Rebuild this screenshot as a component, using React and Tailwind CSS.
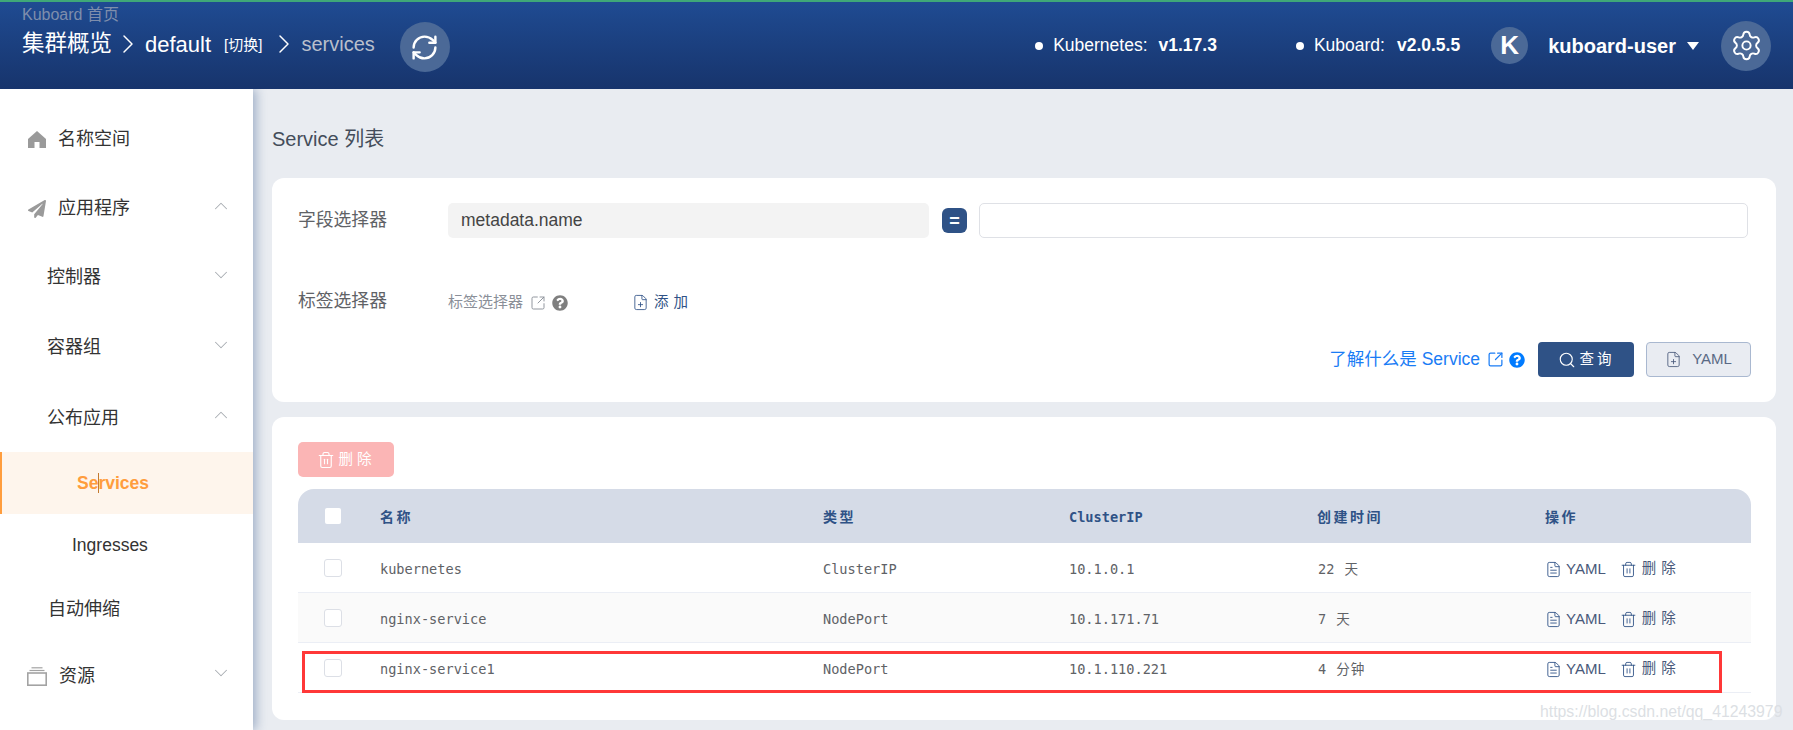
import { ChevronDown, ChevronUp, ChevronRight, RefreshCw, Settings, SquareArrowOutUpRight, FilePlus, FileText, Trash2, Search } from 'lucide-react';
import { FaQuestionCircle, FaPaperPlane } from 'react-icons/fa';

const rows = [
    { name: 'kubernetes', type: 'ClusterIP', ip: '10.1.0.1', num: '22', unit: '天' },
    { name: 'nginx-service', type: 'NodePort', ip: '10.1.171.71', num: '7', unit: '天', striped: true },
    { name: 'nginx-service1', type: 'NodePort', ip: '10.1.110.221', num: '4', unit: '分钟' },
];

const tableCols = 'grid grid-cols-[82px_443px_246px_248px_228px_1fr] items-center';

function NavRow({ height, indent, icon, label, chevron }) {
    return (
        <div className={`flex items-center ${height} ${indent} pt-[2px] pr-[21px] text-[18px] text-[#333]`}>
            {icon}
            <span>{label}</span>
            {chevron === 'up' && <ChevronUp className="ml-auto -mt-[6px] w-[22px] h-[22px] text-[#a8acb2]" strokeWidth={1.1} />}
            {chevron === 'down' && <ChevronDown className="ml-auto -mt-[6px] w-[22px] h-[22px] text-[#a8acb2]" strokeWidth={1.1} />}
        </div>
    );
}

function Sidebar() {
    return (
        <div className="relative z-10 w-[253px] shrink-0 bg-white pt-[14px] shadow-[3px_0_10px_rgba(47,82,134,0.4)]">
            <NavRow
                height="h-[70px]"
                indent="pl-[28px]"
                label="名称空间"
                icon={
                    <svg viewBox="0 0 18 18" className="w-[18px] h-[18px] mr-[12px]" fill="#9a9a9a">
                        <path d="M9 1 L18 9 V18 H11.5 V12 H6.5 V18 H0 V9 Z" />
                    </svg>
                }
            />
            <NavRow
                height="h-[69px]"
                indent="pl-[28px]"
                label="应用程序"
                chevron="up"
                icon={<FaPaperPlane className="w-[18px] h-[18px] mr-[12px] text-[#9a9a9a]" />}
            />
            <NavRow height="h-[69px]" indent="pl-[47px]" label="控制器" chevron="down" />
            <NavRow height="h-[71px]" indent="pl-[47px]" label="容器组" chevron="down" />
            <NavRow height="h-[70px]" indent="pl-[47px]" label="公布应用" chevron="up" />
            <div className="relative flex items-center h-[62px] pl-[75px] border-l-2 border-[#ff9d3d] bg-[#fef5ec] text-[17.5px] font-bold text-[#ff9d3d]">
                Services
                <span className="absolute left-[96px] top-[21px] h-[20px] w-px bg-[#c47a30]" />
            </div>
            <div className="flex items-center h-[62px] pl-[72px] pt-[1px] text-[17.5px] text-[#333]">Ingresses</div>
            <NavRow height="h-[64px]" indent="pl-[48px]" label="自动伸缩" />
            <NavRow
                height="h-[70px]"
                indent="pl-[27px]"
                label="资源"
                chevron="down"
                icon={
                    <svg viewBox="0 0 20 19" className="w-[20px] h-[19px] mr-[12px]" fill="none" stroke="#a3a3a3">
                        <path d="M4.5 0.8 H15.5" strokeWidth="1.2" />
                        <path d="M2.5 3.5 H17.5" strokeWidth="1.2" />
                        <rect x="0.8" y="6" width="18.4" height="12.2" strokeWidth="1.6" />
                    </svg>
                }
            />
        </div>
    );
}

function Header() {
    return (
        <div className="relative z-20 flex h-[89px] shrink-0 border-t-2 border-[#3fa878] bg-gradient-to-b from-[#1f4b92] to-[#17346c] text-white">
            <div className="flex self-start pl-[22px]">
                <div>
                    <div className="mt-[3px] h-[20px] text-[16px] leading-[20px] text-[#7f8eac]">Kuboard 首页</div>
                    <div className="mt-[1px] flex items-center h-[36px]">
                        <span className="text-[22.5px]">集群概览</span>
                        <ChevronRight className="w-[32px] h-[32px]" strokeWidth={1.1} />
                        <span className="ml-[1px] text-[22px]">default</span>
                        <span className="ml-[13px] mt-[3px] text-[15px]">[切换]</span>
                        <ChevronRight className="ml-[6px] w-[32px] h-[32px]" strokeWidth={1.1} />
                        <span className="ml-[1px] text-[20px] text-[#b9bfcc]">services</span>
                    </div>
                </div>
                <div className="ml-[25px] mt-[20px] flex items-center justify-center w-[50px] h-[50px] rounded-full bg-[#4b6997]">
                    <RefreshCw className="w-[29px] h-[29px]" strokeWidth={2} />
                </div>
            </div>
            <div className="ml-auto flex items-center pr-[22px] text-[17.5px]">
                <span className="w-[8px] h-[8px] rounded-full bg-white mr-[10px]" />
                <span>Kubernetes:</span>
                <span className="ml-[11px] font-bold">v1.17.3</span>
                <span className="ml-[79px] w-[8px] h-[8px] rounded-full bg-white mr-[10px]" />
                <span>Kuboard:</span>
                <span className="ml-[12px] font-bold">v2.0.5.5</span>
                <span className="ml-[31px] flex items-center justify-center w-[37px] h-[37px] rounded-full bg-[#4b6997] text-[26px] font-bold">K</span>
                <span className="ml-[20px] text-[20px] font-bold">kuboard-user</span>
                <span className="ml-[11px] w-0 h-0 border-x-[6.5px] border-x-transparent border-t-[8px] border-t-white" />
                <span className="ml-[22px] flex items-center justify-center w-[50px] h-[50px] rounded-full bg-[#4b6997]">
                    <Settings className="w-[33px] h-[33px]" strokeWidth={1.4} />
                </span>
            </div>
        </div>
    );
}

function FilterCard() {
    return (
        <div className="h-[224px] rounded-[12px] bg-white pt-[25px] pl-[26px] pr-[28px]">
            <div className="flex items-center h-[35px]">
                <span className="w-[150px] text-[17.8px] text-[#606266]">字段选择器</span>
                <div className="flex items-center w-[481px] h-[35px] rounded-[5px] bg-[#f3f3f3] pl-[13px] text-[17.5px] text-[#444]">metadata.name</div>
                <span className="ml-[13px] flex items-center justify-center w-[25px] h-[25px] rounded-[6px] bg-[#2f5286] text-[18px] leading-none font-bold text-white">=</span>
                <div className="ml-[12px] flex-1 h-[35px] rounded-[5px] border border-[#dfe1e6]" />
            </div>
            <div className="flex items-center mt-[47px] h-[35px]">
                <span className="w-[150px] -mt-[2px] text-[17.8px] text-[#606266]">标签选择器</span>
                <span className="text-[15px] text-[#8a8f98]">标签选择器</span>
                <SquareArrowOutUpRight className="ml-[7px] w-[16px] h-[16px] text-[#8a8f98]" strokeWidth={1.4} />
                <FaQuestionCircle className="ml-[6px] w-[16px] h-[16px] text-[#7f7f7f]" />
                <FilePlus className="ml-[64px] w-[17px] h-[17px] text-[#2f5286]" strokeWidth={1.2} />
                <span className="ml-[5px] text-[14.5px] tracking-[5px] text-[#2f5286]">添加</span>
            </div>
            <div className="flex items-center justify-end mt-[22px] h-[35px] -mr-[3px]">
                <span className="text-[17.5px] text-[#1a7cf5]">了解什么是 Service</span>
                <SquareArrowOutUpRight className="ml-[7px] w-[17px] h-[17px] text-[#1a7cf5]" strokeWidth={1.75} />
                <FaQuestionCircle className="ml-[5px] w-[16px] h-[16px] text-[#007bff]" />
                <button className="ml-[13px] flex items-center justify-center w-[96px] h-[35px] rounded-[4px] bg-[#2f5286] text-[14.5px] tracking-[3px] text-white">
                    <Search className="w-[18px] h-[18px] mr-[4px]" strokeWidth={1.5} />
                    查询
                </button>
                <button className="ml-[12px] flex items-center justify-center w-[105px] h-[35px] rounded-[4px] border border-[#a9b8d0] bg-[#e9ecf2] text-[15px] text-[#5a6a85]">
                    <FilePlus className="w-[17px] h-[17px] mr-[10px] text-[#48597a]" strokeWidth={1.2} />
                    YAML
                </button>
            </div>
        </div>
    );
}

function Row({ row }) {
    return (
        <div className={`${tableCols} h-[50px] border-b border-[#ebeef5] font-['DejaVu_Sans_Mono','Noto_Sans_CJK_SC',monospace] text-[13.6px] text-[#606266] ${row.striped ? 'bg-[#fafafa]' : 'bg-white'}`}>
            <div className="pl-[26px]">
                <div className="w-[18px] h-[18px] rounded-[3px] border border-[#dcdfe6] bg-white" />
            </div>
            <span className="pt-[4px]">{row.name}</span>
            <span className="pt-[4px]">{row.type}</span>
            <span className="pt-[4px]">{row.ip}</span>
            <span className="pt-[3px] pl-px">
                {row.num}
                <span className="ml-[10px] tracking-[1px]">{row.unit}</span>
            </span>
            <span className="flex items-center pt-[3px] font-['Liberation_Sans','Noto_Sans_CJK_SC',sans-serif] text-[15px] text-[#48597a]">
                <FileText className="w-[17px] h-[17px] text-[#2f5286]" strokeWidth={1.25} />
                <span className="ml-[4px]">YAML</span>
                <Trash2 className="ml-[14px] w-[17px] h-[17px] text-[#2f5286]" strokeWidth={1.25} />
                <span className="ml-[5px] text-[14.5px] tracking-[5px]">删除</span>
            </span>
        </div>
    );
}

function ListCard() {
    return (
        <div className="h-[303px] rounded-[12px] bg-white pt-[25px] pl-[26px] pr-[25px]">
            <button className="flex items-center justify-center w-[96px] h-[35px] rounded-[5px] bg-[#fbb5b5] text-[14.5px] tracking-[4px] text-white">
                <Trash2 className="w-[18px] h-[18px] mr-[4px]" strokeWidth={1.5} />
                删除
            </button>
            <div className={`${tableCols} mt-[12px] h-[54px] rounded-t-[16px] bg-[#d5dbe7] text-[14px] font-bold tracking-[2.5px] text-[#2f5286]`}>
                <div className="pl-[27px]">
                    <div className="w-[16px] h-[16px] rounded-[2px] bg-white" />
                </div>
                <span className="pt-[2px]">名称</span>
                <span className="pt-[2px]">类型</span>
                <span className="pt-[2px] font-['DejaVu_Sans_Mono',monospace] text-[13.6px] tracking-normal">ClusterIP</span>
                <span className="pt-[2px]">创建时间</span>
                <span className="pt-[2px]">操作</span>
            </div>
            {rows.map((row) => (
                <Row key={row.name} row={row} />
            ))}
        </div>
    );
}

export default function App() {
    return (
        <div className="relative flex flex-col h-[730px] w-[1793px] overflow-hidden bg-[#e9ecf1] font-['Liberation_Sans','Noto_Sans_CJK_SC',sans-serif]">
            <Header />
            <div className="flex flex-1">
                <Sidebar />
                <div className="flex-1 pl-[19px] pr-[17px] pt-[36px]">
                    <div className="h-[28px] mb-[25px] text-[20px] leading-[28px] text-[#444c5a]">Service 列表</div>
                    <FilterCard />
                    <div className="h-[15px]" />
                    <ListCard />
                </div>
            </div>
            {/* annotation drawn over the last row */}
            <div className="absolute left-[302px] top-[651px] w-[1420px] h-[42px] border-[3px] border-[#ff3838]" />
            <div className="absolute left-[1540px] top-[699px] text-[15.8px] leading-[26px] text-[#dcdfe4]">https://blog.csdn.net/qq_41243979</div>
        </div>
    );
}
